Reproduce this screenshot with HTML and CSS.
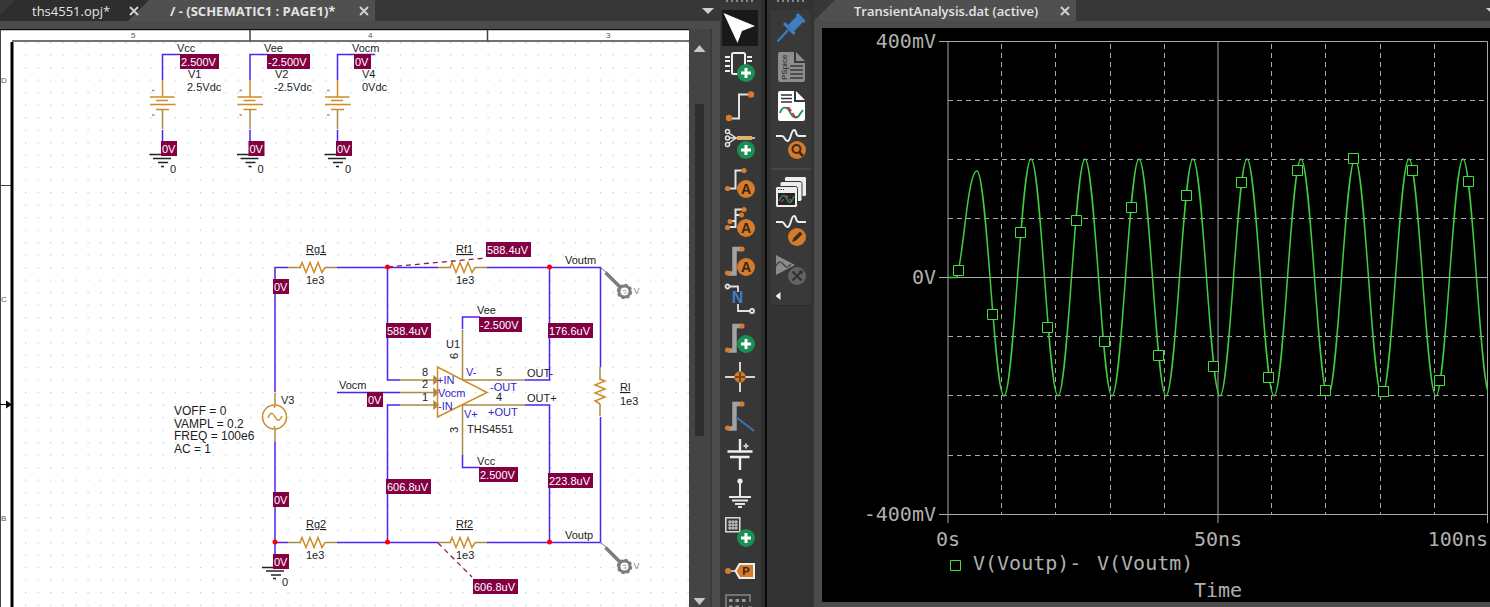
FILE: index.html
```html
<!DOCTYPE html>
<html lang="en">
<head>
<meta charset="utf-8">
<title>THS4551 schematic and transient analysis</title>
<link rel="stylesheet" href="styles.css">
</head>
<body>
<svg class="defs" aria-hidden="true">
  <defs>
    <symbol id="badge-plus" viewBox="0 0 30 30"><circle cx="21" cy="21" r="9" fill="#1a9055"/><path d="M21 16v10M16 21h10" stroke="#fff" stroke-width="3"/></symbol>
    <symbol id="badge-a" viewBox="0 0 30 30"><circle cx="21" cy="21" r="9" fill="#d57b29"/><text class="badge-letter" x="21" y="26" text-anchor="middle">A</text></symbol>
    <symbol id="bus" viewBox="0 0 30 30"><path d="M3 27.500H9.500V3H17" fill="none" stroke="#a2a2a2" stroke-width="4.500"/><circle cx="2.500" cy="27" r="2.600" fill="#d57b29"/><circle cx="17" cy="3" r="2.600" fill="#d57b29"/></symbol>
    <g id="battery">
      <path class="wire" d="M180 54.500H162.500V80M162.500 130V143"/>
      <path class="part" d="M162.500 80V97M150 97H174.500M156 100.500H168M150 104.500H175.500M156 109.500H169"/>
      <path class="pin" d="M162.500 110V129"/>
      <path class="part" d="M152 90.500h2.500M152 115h2.500"/>
      <path class="ground" d="M149.500 154.500H175M153 158.500H171M158 162.500H168M161 166.500H164"/>
      <rect class="tag" x="161" y="141" width="16" height="15"/>
      <text class="tag-text" x="162" y="153">0V</text>
      <text x="170" y="173">0</text>
    </g>
    <g id="resistor" fill="none">
      <path class="pin" d="M-49 0H-36M-12 0H0"/>
      <path class="part" d="M-37 0L-35 -5L-31 5L-27 -5L-23 5L-19 -5L-15 5L-12 0"/>
    </g>
    <g id="probe">
      <g fill="none">
        <path d="M0 0L6 5" stroke="#777"/>
        <path d="M5 5L20 20" stroke="#7d7d7d" stroke-width="3.500"/>
        <circle cx="24" cy="24" r="5.500" stroke="#7d7d7d" stroke-width="3"/>
        <circle cx="24" cy="24" r="7" stroke="#7d7d7d" stroke-width="1.500" stroke-dasharray="3 2.500"/>
        <path d="M22 23h4M23 25.500h3" stroke="#aaa"/>
      </g>
      <text class="probe-text" x="33" y="26">V</text>
    </g>
    <pattern id="dots" x="25" y="42" width="12.500" height="12.500" patternUnits="userSpaceOnUse"><rect width="1.300" height="1.300" fill="#a8d8f0"/></pattern>
  </defs>
</svg>

<main class="app">
  <section class="pane pane-schematic">
    <nav class="tabs">
      <div class="tab tab-project"><button class="tab-name">ths4551.opj*</button><button class="close" aria-label="Close project"><svg viewBox="0 0 8 8"><path d="M0 0L8 8M8 0L0 8"/></svg></button></div>
      <div class="tab tab-page"><button class="tab-name bold">/ - (SCHEMATIC1 : PAGE1)*</button><button class="close" aria-label="Close page"><svg viewBox="0 0 8 8"><path d="M0 0L8 8M8 0L0 8"/></svg></button></div>
      <button class="tab-list" aria-label="List of tabs"></button>
    </nav>
    <div class="work">
      <svg class="sheet" role="img" aria-label="Schematic page">
        <g transform="translate(0 -29)">
          <rect x="14" y="42" width="2000" height="2000" fill="url(#dots)"/>
          <g fill="none">
            <path d="M0 29.500H2000" stroke="#111" stroke-width="1.500"/>
            <path d="M.5 30V2000M0 185.500H11" stroke="#444"/>
            <path d="M12 41H2000M250 30V41M487.500 30V41" stroke="#444" stroke-width="1.500"/>
            <path d="M12 42V2000" stroke="#000" stroke-width="3"/>
            <path d="M0 404.500H8" stroke="#000"/>
            <path d="M6 400.500L12 404.500L6 408.500Z" fill="#000"/>
          </g>
          <g class="zone"><text x="131" y="38">5</text><text x="368" y="38">4</text><text x="606" y="38">3</text><text x="1" y="83">D</text><text x="1" y="302">C</text><text x="1" y="521">B</text></g>

          <text x="177" y="52">Vcc</text><text x="188" y="78">V1</text><text x="187" y="91">2.5Vdc</text>
          <text x="264" y="52">Vee</text><text x="275" y="78">V2</text><text x="274" y="91">-2.5Vdc</text>
          <text x="352" y="52">Vocm</text><text x="362" y="78">V4</text><text x="362" y="91">0Vdc</text>
          <use href="#battery"/><use href="#battery" x="87.500"/><use href="#battery" x="175"/>
          <path class="wire" d="M355 54.500H375"/>
          <rect class="tag" x="180" y="54" width="39" height="15"/><text class="tag-text" x="181" y="66">2.500V</text>
          <rect class="tag" x="267" y="54" width="43" height="15"/><text class="tag-text" x="268" y="66">-2.500V</text>
          <rect class="tag" x="354" y="54" width="17" height="15"/><text class="tag-text" x="355" y="66">0V</text>

          <g class="wire">
            <path d="M288 267.500H275V392M275 442V565M275 542.500H288"/>
            <path d="M337 267.500H438M487 267.500H600.500V367M600.500 417V542.500H487M438 542.500H337"/>
            <path d="M387.500 267.500V380H400M337 392.500H400M400 405H387.500V542.500"/>
            <path d="M549.500 267.500V380H525M525 405H549.500V542.500"/>
            <path d="M480 317H462.500V329M462.500 455V467.500H480"/>
          </g>
          <use href="#resistor" x="337" y="267.500"/><use href="#resistor" x="487" y="267.500"/>
          <use href="#resistor" x="337" y="542.500"/><use href="#resistor" x="487" y="542.500"/>
          <use href="#resistor" transform="translate(600 416) rotate(90)"/>
          <g class="pin">
            <path d="M275 393V405M275 429V442M400 380H437M400 392.500H437M400 405H437M463 380H525M463 405H525M462.500 330V380M462.500 405V455"/>
            <path d="M434 376.500V383.500L438 380ZM434 389V396L438 392.500ZM434 401.500V408.500L438 405Z" fill="#a8853f"/>
          </g>
          <g class="part">
            <circle cx="274.500" cy="417" r="12"/>
            <path d="M268 418C271 411 273 413 275 417S279 422 282 416M274.500 406v2M274.500 426v2M437.500 367V417L487 392.500Z"/>
          </g>
          <path class="leader" d="M388 267L486 258M438 543L472 577"/>
          <g class="node"><circle cx="387.500" cy="267" r="2.500"/><circle cx="549.500" cy="267" r="2.500"/><circle cx="275" cy="542" r="2.500"/><circle cx="387.500" cy="542" r="2.500"/><circle cx="549.500" cy="542" r="2.500"/></g>
          <path class="ground" d="M262 567.500H283M266 571H284M271 575H281M273 578.500H276"/>
          <use href="#probe" x="600.500" y="267.500"/><use href="#probe" x="600.500" y="542.500"/>

          <g class="under"><text x="306" y="253">Rg1</text><text x="456" y="253">Rf1</text><text x="306" y="528">Rg2</text><text x="456" y="528">Rf2</text><text x="620" y="391">Rl</text></g>
          <text x="306" y="284">1e3</text><text x="456" y="284">1e3</text><text x="306" y="559">1e3</text><text x="456" y="559">1e3</text><text x="620" y="405">1e3</text>
          <text x="565" y="264">Voutm</text><text x="565" y="539">Voutp</text>
          <text x="477" y="314">Vee</text><text x="477" y="465">Vcc</text><text x="446" y="348">U1</text>
          <text transform="translate(458 359) rotate(-90)">6</text><text transform="translate(458 433) rotate(-90)">3</text>
          <text x="422" y="376">8</text><text x="422" y="388">2</text><text x="422" y="401">1</text>
          <text x="496" y="376">5</text><text x="496" y="401">4</text>
          <text x="527" y="377">OUT-</text><text x="527" y="402">OUT+</text><text x="467" y="433">THS4551</text>
          <text x="339" y="389">Vocm</text><text x="281" y="404">V3</text><text x="282" y="586">0</text>
          <g class="pin-name"><text x="437" y="384">+IN</text><text x="438" y="397">Vocm</text><text x="438" y="410">-IN</text><text x="466" y="376">V-</text><text x="464" y="418">V+</text><text x="490" y="391">-OUT</text><text x="488" y="416">+OUT</text></g>
          <g class="params"><text x="174" y="415">VOFF = 0</text><text x="174" y="428">VAMPL = 0.2</text><text x="174" y="440">FREQ = 100e6</text><text x="174" y="453">AC = 1</text></g>

          <g class="tag"><rect x="273" y="279" width="16" height="15"/><rect x="273" y="492" width="16" height="15"/><rect x="273" y="554" width="16" height="15"/><rect x="367" y="392" width="16" height="15"/><rect x="386" y="323" width="45" height="15"/><rect x="386" y="479" width="45" height="15"/><rect x="486" y="242" width="45" height="15"/><rect x="479" y="317" width="43" height="15"/><rect x="548" y="323" width="45" height="15"/><rect x="479" y="467" width="39" height="15"/><rect x="548" y="473" width="45" height="15"/><rect x="473" y="579" width="45" height="15"/></g>
          <g class="tag-text"><text x="274" y="291">0V</text><text x="274" y="504">0V</text><text x="274" y="566">0V</text><text x="368" y="404">0V</text><text x="387" y="335">588.4uV</text><text x="387" y="491">606.8uV</text><text x="487" y="254">588.4uV</text><text x="480" y="329">-2.500V</text><text x="549" y="335">176.6uV</text><text x="480" y="479">2.500V</text><text x="549" y="485">223.8uV</text><text x="474" y="591">606.8uV</text></g>
        </g>
      </svg>
      <div class="scrollbar"><button class="arrow up" aria-label="Scroll up"></button><div class="track"><div class="thumb"></div></div><button class="arrow down" aria-label="Scroll down"></button></div>
    </div>
  </section>

  <aside class="toolbar toolbar-place">
    <div class="grip"></div>
    <button class="tool selected" aria-label="Select"><svg viewBox="0 0 30 30"><path d="M-1.500 0L30 13L17 18L12.500 30Z" fill="#fff"/></svg></button>
    <button class="tool" aria-label="Place part"><svg viewBox="0 0 30 30"><g fill="none" stroke="#eee" stroke-width="2"><rect x="7" y="1" width="13" height="21" rx="1.500"/><path d="M0 5h5M0 9h5M0 14h5M0 19h5M22 5h5M22 9h5"/></g><use href="#badge-plus"/></svg></button>
    <button class="tool" aria-label="Place wire"><svg viewBox="0 0 30 30"><path d="M4 27.500H14V3.500H26" fill="none" stroke="#e2e2e2" stroke-width="2"/><g fill="#d57b29"><circle cx="26" cy="3.500" r="3.200"/><circle cx="4" cy="27" r="3.200"/></g></svg></button>
    <button class="tool" aria-label="Place net group"><svg viewBox="0 0 30 30"><g fill="none" stroke="#e2e2e2" stroke-width="1.500"><circle cx="2.500" cy="2.500" r="2"/><circle cx="2.500" cy="9" r="2"/><circle cx="2.500" cy="15.500" r="2"/><path d="M4 4L11 9L4 14M4 9H30"/></g><path d="M12 9H27" stroke="#dfae70" stroke-width="4"/><use href="#badge-plus"/></svg></button>
    <button class="tool" aria-label="Auto wire two points"><svg viewBox="0 0 30 30"><path d="M2 20.500H10.500V2.500H19" fill="none" stroke="#e2e2e2" stroke-width="2"/><g fill="#d57b29"><circle cx="19" cy="2.500" r="2.600"/><circle cx="2.500" cy="20.500" r="2.600"/></g><use href="#badge-a"/></svg></button>
    <button class="tool" aria-label="Auto wire multiple points"><svg viewBox="0 0 30 30"><path d="M2 20H10.500V2.500H19M10.500 8H16M5 14H10.500" fill="none" stroke="#e2e2e2" stroke-width="2"/><g fill="#d57b29"><circle cx="19" cy="2.500" r="2.600"/><circle cx="16.500" cy="8" r="2.500"/><circle cx="5" cy="14.500" r="2.500"/><circle cx="2.500" cy="20.500" r="2.600"/></g><use href="#badge-a"/></svg></button>
    <button class="tool" aria-label="Auto connect to bus"><svg viewBox="0 0 30 30"><use href="#bus"/><use href="#badge-a"/></svg></button>
    <button class="tool" aria-label="Place net alias"><svg viewBox="0 0 30 30"><g fill="none" stroke="#e2e2e2" stroke-width="1.800"><circle cx="2.500" cy="2.500" r="2"/><path d="M4.500 2.500H13V8M13 20V27H25"/><circle cx="27" cy="27" r="2"/></g><text class="alias-letter" x="12.500" y="19" text-anchor="middle">N</text></svg></button>
    <button class="tool" aria-label="Place bus"><svg viewBox="0 0 30 30"><use href="#bus"/><use href="#badge-plus"/></svg></button>
    <button class="tool" aria-label="Place junction"><svg viewBox="0 0 30 30"><path d="M15 0V30M0 15H30" stroke="#d5d5d5" stroke-width="2"/><circle cx="15" cy="15" r="5.700" fill="#d57b29"/><path d="M15 10V20M10 15H20" stroke="#6e4823" stroke-width="2"/></svg></button>
    <button class="tool" aria-label="Place bus entry"><svg viewBox="0 0 30 30"><use href="#bus"/><path d="M11 16L29 30" stroke="#3d78b5" stroke-width="1.800"/></svg></button>
    <button class="tool" aria-label="Place power"><svg viewBox="0 0 30 30"><path d="M15 0V12M2.500 12.500H27.500M5 18H24.500M15 18V31" fill="none" stroke="#eee" stroke-width="2.400"/><path d="M21 4.500v5M18.500 7h5" stroke="#ccc" stroke-width="2"/></svg></button>
    <button class="tool" aria-label="Place ground"><svg viewBox="0 0 30 30"><circle cx="15" cy="3" r="2.600" fill="#eee"/><path d="M15 3V19M4 19H26M7 22.500H23M10 26H20M13 29H17" stroke="#e6e6e6" stroke-width="2"/></svg></button>
    <button class="tool" aria-label="Place block"><svg viewBox="0 0 30 30"><rect x=".8" y=".8" width="14" height="14" fill="none" stroke="#ddd" stroke-width="1.500"/><path d="M3 5H13M3 8H13M3 11H13M5 3V13M8 3V13M11 3V13" stroke="#bbb" stroke-width="1.300"/><use href="#badge-plus"/></svg></button>
    <button class="tool" aria-label="Place port"><svg viewBox="0 0 30 30"><path d="M3 15H10" stroke="#bbb" stroke-width="2"/><circle cx="3" cy="15" r="3" fill="#d57b29"/><path d="M10.500 15L14.500 8H29V22H14.500Z" fill="#d57b29" stroke="#eee" stroke-width="2"/><text class="port-letter" x="21" y="19" text-anchor="middle">P</text></svg></button>
    <button class="tool" aria-label="Place pin"><svg viewBox="0 0 30 30"><path d="M25 8V1H1V30" fill="none" stroke="#888" stroke-width="1.500"/><path d="M4 6.500H22M4 13H18" stroke="#999" stroke-width="3" stroke-dasharray="3.500 3"/><circle cx="25" cy="15" r="3" fill="#777"/></svg></button>
  </aside>

  <aside class="toolbar toolbar-sim">
    <div class="grip"></div>
    <div class="panel">
      <button class="tool" aria-label="Pin results"><svg viewBox="0 0 30 30"><g stroke="#3d7fc4" fill="none"><path d="M1.500 28.500L12 17" stroke-width="2"/><path d="M8 10L18.500 21" stroke-width="3.200"/><path d="M21 1L28.500 9" stroke-width="3.200"/></g><path d="M12 12L21 3L27 9L18 18.500Z" fill="#3d7fc4"/></svg></button>
      <button class="tool" aria-label="View netlist"><svg viewBox="0 0 30 30"><path d="M4 0H18V11H29V28Q29 30 27 30H4Q2 30 2 28V2Q2 0 4 0ZM20 0L29 9H20Z" fill="#8d8d8d"/><path d="M14 14H27M14 18H27M14 22H27M14 26H27" stroke="#3b3b3b" stroke-width="1.500"/><text class="netlist-text" transform="translate(11 28) rotate(-90)">PSpice</text></svg></button>
      <button class="tool" aria-label="View output file"><svg viewBox="0 0 30 30"><path d="M4 0H18V11H29V28Q29 30 27 30H4Q2 30 2 28V2Q2 0 4 0ZM20 0L29 9H20Z" fill="#fff"/><path d="M5 4H16M5 7.500H16M5 11H16" stroke="#333" stroke-width="1.500"/><path d="M4 22C6 15 11 15 14 21S21 29 24 23L27 19" fill="none" stroke="#18905c" stroke-width="1.800"/><path d="M10 17H13L19 26H23" fill="none" stroke="#d72f4b" stroke-width="1.800" stroke-dasharray="7 2"/></svg></button>
      <button class="tool" aria-label="View results"><svg viewBox="0 0 30 30"><path d="M0 6H6C9 6 9 12 12 11S15 0 18 0S19 6 23 6H30" fill="none" stroke="#eee" stroke-width="2"/><circle cx="21" cy="20" r="9" fill="#d57b29"/><circle cx="20.500" cy="19" r="4" fill="none" stroke="#3c2c1e" stroke-width="2"/><path d="M23 22L27 26" stroke="#3c2c1e" stroke-width="2.500"/></svg></button>
      <hr>
      <button class="tool" aria-label="Plot windows"><svg viewBox="0 0 30 30"><g fill="#eee" stroke="#373737"><rect x="8.500" y="-.5" width="22" height="20" rx="2"/><rect x="4" y="4.500" width="22" height="20" rx="2"/><rect x="-.5" y="9.500" width="22" height="21" rx="2"/></g><rect x="2" y="16" width="17" height="12" fill="#242424"/><path d="M2 12.500h6" stroke="#333" stroke-dasharray="1.500 1"/><path d="M3 24C6 17 9 17 11 22S15 27 18 19" fill="none" stroke="#18905c" stroke-width="1.600"/><path d="M5 25C8 23 10 17 12 20S15 25 18 22" fill="none" stroke="#d72f4b" stroke-width="1.400" stroke-dasharray="4 2"/></svg></button>
      <button class="tool" aria-label="Edit profile"><svg viewBox="0 0 30 30"><path d="M0 6H6C9 6 9 12 12 11S15 0 18 0S19 6 23 6H30" fill="none" stroke="#eee" stroke-width="2"/><circle cx="21" cy="21" r="9" fill="#d57b29"/><path d="M16 26L17.500 22L24 15.500L26.500 18L20 24.500Z" fill="#3c2c1e"/></svg></button>
      <button class="tool" aria-label="Simulation settings" disabled><svg viewBox="0 0 30 30"><path d="M0 0V20L19 10Z" fill="#8b8b8b"/><path d="M0 11C3 5 6 7 8 10S12 13 15 9" fill="none" stroke="#4a4a4a" stroke-width="1.500"/><circle cx="21" cy="21" r="9" fill="#636363"/><path d="M16.500 16.500L25.500 25.500M25.500 16.500L16.500 25.500" stroke="#333" stroke-width="2.200"/><circle cx="25" cy="17" r="2" fill="#333"/></svg></button>
      <button class="more" aria-label="More tools"></button>
    </div>
  </aside>

  <section class="pane pane-plot">
    <nav class="tabs">
      <div class="tab tab-data"><button class="tab-name bold">TransientAnalysis.dat (active)</button><button class="close" aria-label="Close plot"><svg viewBox="0 0 8 8"><path d="M0 0L8 8M8 0L0 8"/></svg></button></div>
      <button class="tab-list" aria-label="List of tabs"></button>
    </nav>
    <svg class="plot" viewBox="822 28 668 574" preserveAspectRatio="xMinYMin meet" role="img" aria-label="Transient response of V(Voutp) - V(Voutm)">
      <g class="grid">
        <path d="M948 100.500H1487M948 159.500H1487M948 218.500H1487M948 336.500H1487M948 395.500H1487M948 455.500H1487"/>
        <path d="M1001.500 44V514M1055.500 44V514M1110.500 44V514M1164.500 44V514M1271.500 44V514M1325.500 44V514M1380.500 44V514M1434.500 44V514"/>
      </g>
      <path class="axis" d="M939 41.500H1487.500V523M939 277.500H1487M939 514.500H1487M948 41V523M1218 41V523"/>
      <clipPath id="plot-area"><path d="M948 41H1488V515H948Z"/></clipPath>
      <path class="trace" clip-path="url(#plot-area)" d="M948 277.500H957C964 250 968 171 977 171c9.800 0 17.200 225 27 225c9.800 0 17.200 -237 27 -237c9.800 0 17.200 237 27 237c9.800 0 17.200 -237 27 -237c9.800 0 17.200 237 27 237c9.800 0 17.200 -237 27 -237c9.800 0 17.200 237 27 237c9.800 0 17.200 -237 27 -237c9.800 0 17.200 237 27 237c9.800 0 17.200 -237 27 -237c9.800 0 17.200 237 27 237c9.800 0 17.200 -237 27 -237c9.800 0 17.200 237 27 237c9.800 0 17.200 -237 27 -237c9.800 0 17.200 237 27 237c9.800 0 17.200 -237 27 -237c9.800 0 17.200 237 27 237c9.800 0 17.200 -237 27 -237c9.800 0 17.200 237 27 237"/>
      <path class="marker" d="M953.500 265.500h10v10h-10zM987.500 309.500h10v10h-10zM1015.500 227.500h10v10h-10zM1042.500 322.500h10v10h-10zM1071.500 215.500h10v10h-10zM1099.500 336.500h10v10h-10zM1126.500 202.500h10v10h-10zM1153.500 350.500h10v10h-10zM1181.500 190.500h10v10h-10zM1208.500 361.500h10v10h-10zM1236.500 177.500h10v10h-10zM1263.500 372.500h10v10h-10zM1292.500 165.500h10v10h-10zM1320.500 385.500h10v10h-10zM1348.500 153.500h10v10h-10zM1378.500 386.500h10v10h-10zM1407.500 165.500h10v10h-10zM1434.500 375.500h10v10h-10zM1463.500 176.500h10v10h-10zM950.500 560.500h10v10h-10z"/>
      <g class="plot-text">
        <text x="936" y="48" text-anchor="end">400mV</text><text x="936" y="284" text-anchor="end">0V</text><text x="936" y="521" text-anchor="end">-400mV</text>
        <text x="936" y="546">0s</text><text x="1194" y="546">50ns</text><text x="1488" y="546" text-anchor="end">100ns</text>
        <text x="973" y="570">V(Voutp)-</text><text x="1097" y="570">V(Voutm)</text><text x="1194" y="597">Time</text>
      </g>
    </svg>
  </section>
</main>
</body>
</html>
```

FILE: styles.css
```css
* { box-sizing: border-box; }
body { margin: 0; height: 100vh; overflow: hidden; background: #494949; font-family: "Open Sans", sans-serif; }
button { margin: 0; padding: 0; border: 0; background: none; color: inherit; font: inherit; }
svg { overflow: visible; }
.defs { position: absolute; width: 0; height: 0; }

.app { display: flex; height: 100vh; }
.pane { display: flex; flex-direction: column; min-width: 0; background: #4b4b4b; }
.pane-schematic { flex: 720 1 0; }
.pane-plot { flex: 676 1 0; }

/* Tab strips: the slanted tab shapes lie behind the labels */
.tabs { display: flex; flex: none; height: 21px; isolation: isolate; background: #373737; color: #e4e4e4; font-size: 13px; line-height: 20px; }
.tab { position: relative; display: flex; align-items: center; justify-content: space-between; white-space: nowrap; }
.tab::before { content: ""; position: absolute; inset: 0; z-index: -1; background: #505050; clip-path: polygon(21px 0, 100% 0, 100% 100%, 0 100%); }
.bold { font-weight: 600; }
.tab-project { width: 150px; padding: 0 12px 0 32px; }
.tab-project::before { background: #2e2e2e; clip-path: polygon(15px 0, 100% 0, 100% 100%, 0 100%, 0 15px); }
.tab-page { width: 247px; margin-left: -22px; padding: 0 7px 0 42px; }
.tab-page .bold { font-weight: 700; }
.tab-data { width: 262px; padding: 0 7px 0 40px; }
.close { display: flex; }
.close svg { width: 8px; height: 8px; fill: none; stroke: #d0d0d0; stroke-width: 2; }
.tab-list { width: 12px; height: 6px; margin: 8px 6px 0 auto; background: #d0d0d0; clip-path: polygon(0 0, 100% 0, 50% 100%); }
.pane-plot .tab-list { margin-right: -8px; }

/* Schematic */
.work { display: flex; flex: 1; min-height: 0; padding: 8px 8px 0 0; }
.sheet { flex: 1; min-width: 0; height: 100%; overflow: hidden; background: #fff; font-family: "Liberation Sans", Arial, sans-serif; font-size: 11px; fill: #1c1c1c; }
.wire { fill: none; stroke: #4d24f2; stroke-width: 1.5; }
.pin { fill: none; stroke: #ac8b49; stroke-width: 1.5; }
.part { fill: none; stroke: #cf8b25; stroke-width: 1.5; }
.ground { fill: none; stroke: #222; stroke-width: 1.5; }
.leader { fill: none; stroke: #8a1c50; stroke-width: 1.3; stroke-dasharray: 5 4; }
.node { fill: #f00; }
.tag { fill: #820041; }
.tag-text { fill: #fff; }
.params { font-size: 12px; }
.under { text-decoration: underline; }
.pin-name { fill: #3424c8; }
.probe-text { fill: #888; font-size: 9px; }
.zone { fill: #555; font-size: 8px; }

.scrollbar { display: flex; flex: none; flex-direction: column; align-items: center; width: 23px; padding: 16px 0 2px; background: #444; border-right: 2px solid #3a3a3a; }
.arrow { width: 12px; height: 7px; background: #c8c8c8; }
.up { clip-path: polygon(50% 0, 100% 100%, 0 100%); }
.down { clip-path: polygon(0 0, 100% 0, 50% 100%); }
.track { flex: 1; padding: 52px 0 162px; }
.thumb { width: 9px; height: 100%; background: #2e2e2e; }

/* Tool strips */
.toolbar { display: flex; flex: none; flex-direction: column; align-items: center; width: 47px; overflow: hidden; background: #373737; }
.toolbar-place { padding-right: 5px; border-right: 2px solid #080808; background: linear-gradient(90deg, #373737 41px, #2f2f2f 41px); }
.toolbar-sim { background: #333; }
.grip { flex: none; width: 28px; height: 2px; margin-bottom: 8px; background: repeating-linear-gradient(90deg, #888 0 2px, transparent 2px 5px); }
.tool { display: flex; flex: none; align-items: center; justify-content: center; width: 36px; height: 36px; margin-bottom: 3px; }
.tool svg { width: 30px; height: 30px; }
.toolbar-place .tool:nth-child(4n) { margin-bottom: 2px; }
.selected { background: #191919; }
.panel { display: flex; flex-direction: column; align-items: center; width: 40px; padding-bottom: 5px; background: #393939; border-bottom: 1px solid #2e2e2e; }
.panel hr { width: 40px; height: 2px; margin: 2px 0 4px; border: 0; background: #484848; }
.more { align-self: flex-start; width: 5px; height: 8px; margin: 1px 0 0 5px; background: #eee; clip-path: polygon(100% 0, 100% 100%, 0 50%); }
.badge-letter { font: bold 14px "Liberation Sans", sans-serif; fill: #332519; }
.alias-letter { font: bold 16px "Liberation Sans", sans-serif; fill: #3d7fc4; }
.port-letter { font: bold 11px "Liberation Sans", sans-serif; fill: #332519; }
.netlist-text { font: 8px "Liberation Sans", sans-serif; fill: #222; }

/* Plot */
.plot { flex: 1; min-height: 0; margin: 7px 0 5px 8px; overflow: hidden; background: #000; }
.grid { fill: none; stroke: #a8a8a8; stroke-dasharray: 5 4; }
.axis { fill: none; stroke: #a8a8a8; stroke-width: 1; }
.trace { fill: none; stroke: #3fce3f; stroke-width: 1.5; }
.marker { fill: #000; stroke: #43e043; }
.plot-text { fill: #b0b0b0; font-family: "DejaVu Sans Mono", monospace; font-size: 20px; }
```
